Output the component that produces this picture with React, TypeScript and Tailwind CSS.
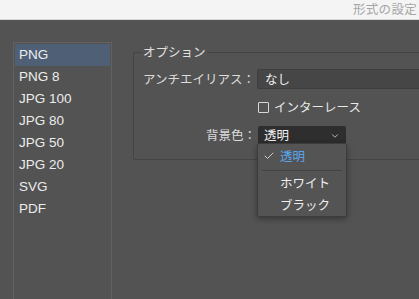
import { Check, ChevronDown } from 'lucide-react';

const formats = ['PNG', 'PNG 8', 'JPG 100', 'JPG 80', 'JPG 50', 'JPG 20', 'SVG', 'PDF'];

const jp = { fontFamily: '"Noto Sans CJK JP", "Noto Sans", sans-serif' };

export default function App() {
  return (
    <div
      className="w-[419px] h-[299px] bg-[#535353] flex flex-col overflow-hidden select-none"
      style={jp}
    >
      <div className="h-[20px] shrink-0 bg-[#f4f4f4] border-b border-[#d8d8d8] flex items-center justify-end pr-[2px]">
        <span className="text-[12.5px] leading-none text-[#a6a6a6] tracking-[0.3px]">形式の設定</span>
      </div>

      <div className="flex-1 flex min-h-0">
        <ul
          className="ml-[13px] mt-[22px] w-[99px] shrink-0 border-x border-t border-[#616161] pt-[1px] px-[1px]"
          style={{ fontFamily: '"Liberation Sans", Arial, sans-serif' }}
        >
          {formats.map((f, i) => (
            <li
              key={f}
              className={`h-[22px] flex items-center pl-[4px] text-[13.5px] text-[#ececec] ${
                i === 0 ? 'bg-[#4e5f76]' : ''
              }`}
            >
              {f}
            </li>
          ))}
        </ul>

        <div className="flex-1 min-w-0 pl-[21px] pt-[25px] -mr-[30px]">
          <fieldset className="relative border border-[#444444] rounded-[2px] h-[115px] pl-[8px] pt-[10px]">
            <legend className="px-[1px] text-[12.5px] leading-[14px] text-[#e0e0e0]">オプション</legend>

            <div className="flex items-center h-[20px]">
              <span className="w-[115px] text-right text-[12.5px] text-[#dcdcdc] pr-[2px]">アンチエイリアス：</span>
              <div className="flex-1 h-[20px] bg-[#464646] border border-[#3e3e3e] rounded-[2px] flex items-center pl-[7px] text-[12.5px] text-[#efefef]">
                なし
              </div>
            </div>

            <div className="flex items-center h-[20px] mt-[8px] pl-[116px]">
              <span className="w-[11px] h-[11px] border border-[#d8d8d8] mr-[5px] rounded-[1px]" />
              <span className="text-[12.5px] text-[#e8e8e8]">インターレース</span>
            </div>

            <div className="flex items-center h-[19px] mt-[9px]">
              <span className="w-[116px] text-right text-[12.5px] text-[#dcdcdc] pr-[2px]">背景色：</span>
              <div className="relative w-[88px] h-[19px]">
                <div className="h-full bg-[#2e2e2e] rounded-[2px] flex items-center justify-between pl-[6px] pr-[6px] text-[12.5px] text-[#f2f2f2]">
                  <span>透明</span>
                  <ChevronDown size={10} strokeWidth={2} className="text-[#cfcfcf]" />
                </div>
                <div className="absolute left-[-1px] top-[17px] w-[90px] bg-[#545454] border border-[#3c3c3c] rounded-[2px] shadow-[0_2px_6px_rgba(0,0,0,0.35)] pt-[1px] pb-0 z-10">
                  <div className="h-[22px] flex items-center text-[12.5px] text-[#58a7ee]">
                    <Check size={12} strokeWidth={2} className="ml-[5px] mr-[5px] text-[#cfcfcf]" />
                    <span>透明</span>
                  </div>
                  <div className="mx-[4px] mt-[3px] mb-[1px] h-px bg-[#444444]" />
                  <div className="h-[22px] flex items-center pl-[22px] text-[12.5px] text-[#eeeeee]">ホワイト</div>
                  <div className="h-[22px] flex items-center pl-[22px] text-[12.5px] text-[#eeeeee]">ブラック</div>
                </div>
              </div>
            </div>
          </fieldset>
        </div>
      </div>
    </div>
  );
}
